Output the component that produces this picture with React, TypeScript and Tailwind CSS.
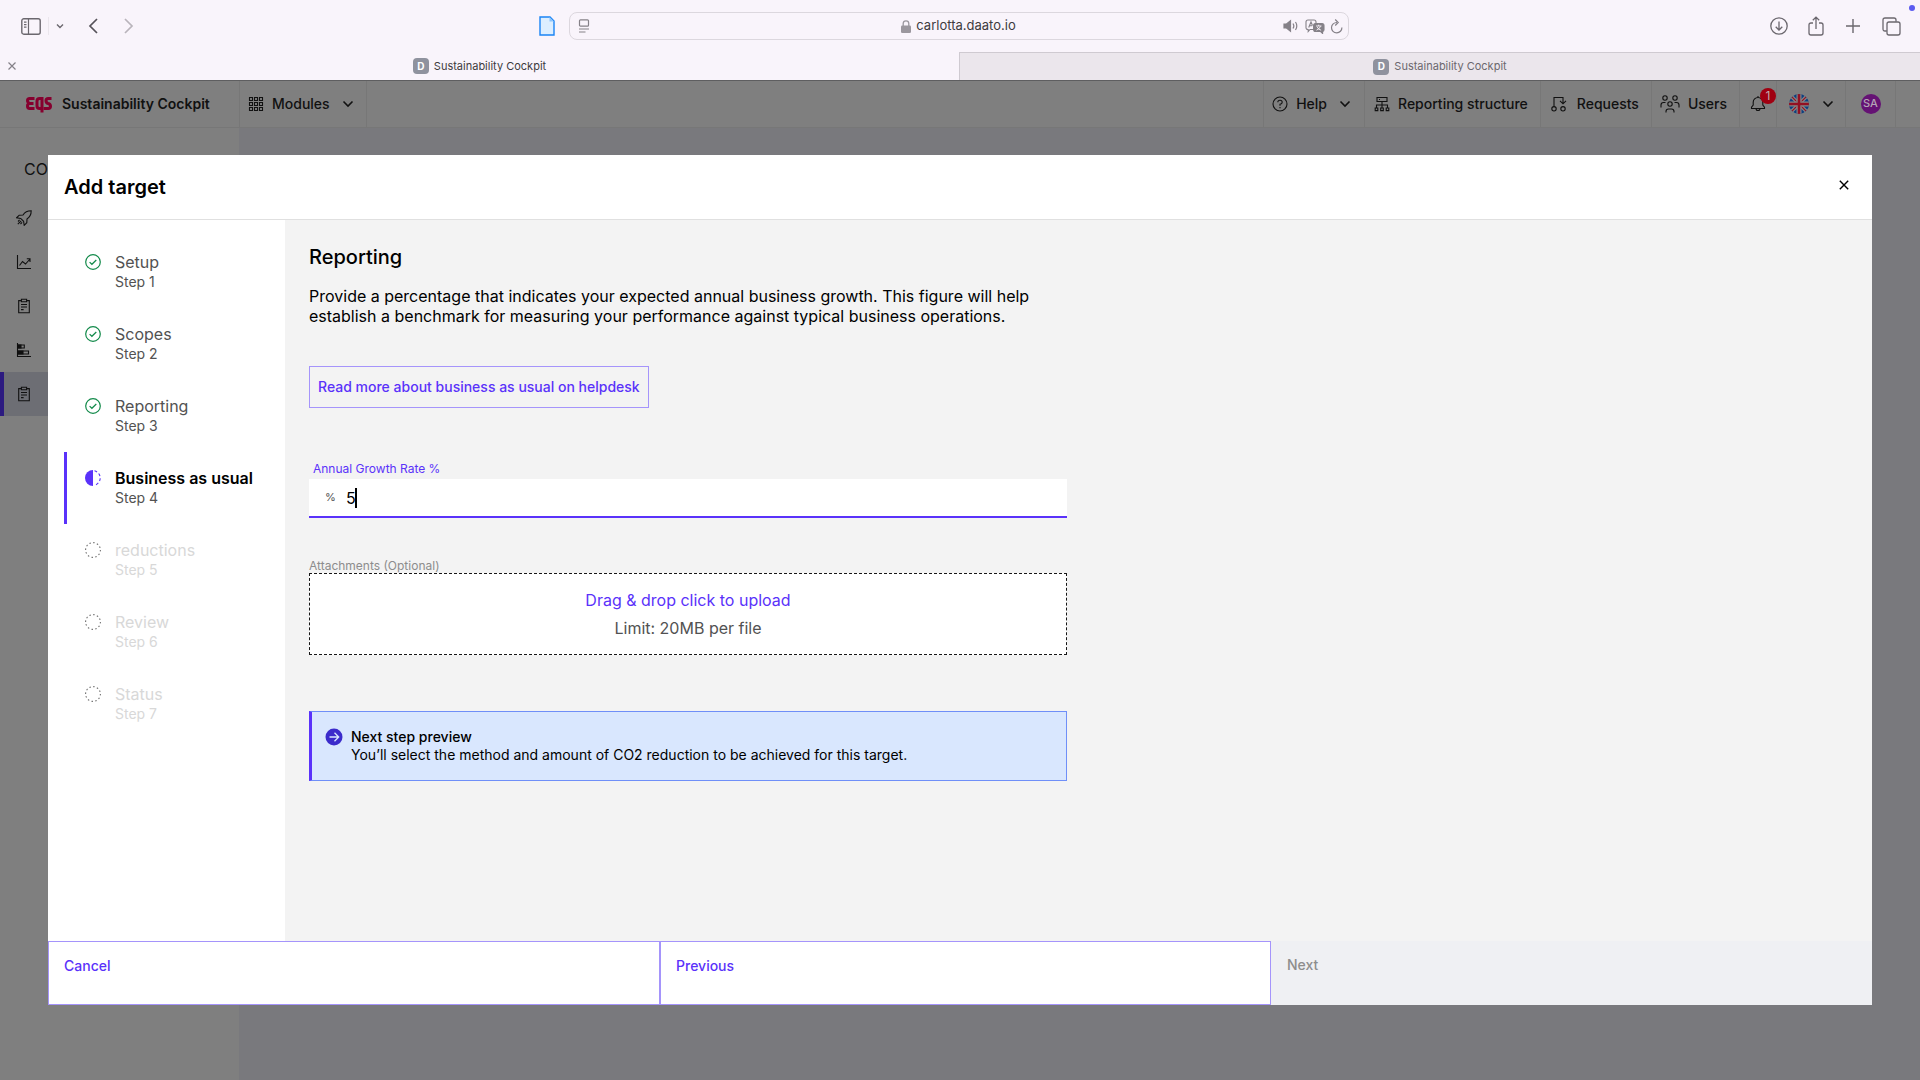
import { useState, type FC, type ReactNode } from "react";

const DashedRing: FC = () => (
  <svg viewBox="0 0 16 16" className="size-4" fill="none" aria-hidden="true">
    <circle cx="8" cy="8" r="7.4" stroke="#6f6f6f" strokeWidth="1.1" strokeDasharray="1.5 2.37" />
  </svg>
);

const HalfRing: FC = () => (
  <svg viewBox="0 0 16 16" className="size-4" fill="none" aria-hidden="true">
    <path d="M9.500 .8A7.400 7.400 0 0 1 9.500 15.200" stroke="#5a32fa" strokeWidth="1.100" strokeDasharray="2.800 2.200" />
    <path d="M8 0a8 8 0 0 0 0 16z" fill="#5a32fa" />
  </svg>
);

const CheckRing: FC = () => (
  <svg viewBox="0 0 16 16" className="size-4" fill="none" stroke="#128a4a" strokeWidth="1.2" aria-hidden="true">
    <circle cx="8" cy="8" r="7.3" />
    <path d="M4.6 8.1l2.3 2.2 4.400-4.300" />
  </svg>
);

const Chevron: FC = () => (
  <svg viewBox="0 0 12 12" className="size-3" fill="none" stroke="currentColor" strokeWidth="1.6" aria-hidden="true">
    <path d="M1.5 3.5L6 8l4.5-4.5" />
  </svg>
);

const Icon: FC<{ children: ReactNode }> = ({ children }) => (
  <svg
    viewBox="0 0 16 16"
    className="size-4 shrink-0"
    fill="none"
    stroke="currentColor"
    strokeWidth="1.1"
    aria-hidden="true"
  >
    {children}
  </svg>
);

const EqsLogo: FC = () => (
  <svg
    viewBox="0 0 27 18"
    className="h-[18px] w-[27px] shrink-0"
    fill="none"
    stroke="#86002f"
    strokeWidth="3"
    role="img"
    aria-label="EQS"
  >
    <path d="M9.500 3.500H4.700Q2.500 3.500 2.500 5.500T4.700 8.500H8.500M4.700 8.500Q2.500 8.500 2.500 11T4.700 13.500H9.500" />
    <path d="M17 17.500V3.500h-2.300q-2.700 0-2.700 2.500v5q0 2.500 2.700 2.500H17" />
    <path d="M26.500 3.500h-3.200q-2.300 0-2.300 2.200t2.200 2.800q2.300.5 2.300 2.700t-2.300 2.300h-4.700" />
  </svg>
);

const UkFlag: FC = () => (
  <svg viewBox="0 0 20 20" className="size-5 shrink-0" role="img" aria-label="English">
    <clipPath id="flag">
      <circle cx="10" cy="10" r="10" />
    </clipPath>
    <g clipPath="url(#flag)">
      <path fill="#0c3f80" d="M0 0h20v20H0z" />
      <path d="M0 0l20 20M20 0L0 20" stroke="#858585" strokeWidth="3.6" />
      <path d="M0 0l20 20M20 0L0 20" stroke="#930f22" strokeWidth="1.2" />
      <path d="M10 0v20M0 10h20" stroke="#858585" strokeWidth="5" />
      <path d="M10 0v20M0 10h20" stroke="#930f22" strokeWidth="2.6" />
    </g>
  </svg>
);

const clipboard = (
  <Icon>
    <path d="M5 2.6H2.7v12.2h10.6V2.6H11" />
    <path d="M5.4 1.2h5.2v2.6H5.4zM5 6.5h6M5 9h6M5 11.6h2.6" />
  </Icon>
);

const sideItems = [
  {
    label: "Get started",
    icon: (
      <Icon>
        <path d="M15.2.8C11 .8 8.6 2.4 7 5L3.2 5.2.6 7.8l4.1.6 2.9 2.9.6 4 2.6-2.6L11 9c2.6-1.6 4.2-4 4.2-8.2zM5.2 10.800l-3.400 3.400M3.600 9.900l-1.600 1.600M6.100 12.400l-1.600 1.600" />
      </Icon>
    ),
  },
  {
    label: "Trends",
    icon: (
      <Icon>
        <path d="M1.5 1v13.5H15M3.5 11.5l3-4 3 2.5 4.5-5M10.8 4.700H14v3.200" />
      </Icon>
    ),
  },
  { label: "Reports", icon: clipboard },
  {
    label: "Comparison",
    icon: (
      <Icon>
        <path d="M1.5 1v13.5H15M1.5 3h6.800v3H1.500M1.500 9h11v3h-11" />
        <path d="M2 3h3v3H2zM2 9h5v3H2z" fill="currentColor" />
      </Icon>
    ),
  },
  { label: "Targets", icon: clipboard, active: true },
];

type StepState = "done" | "current" | "todo";

const steps: { name: string; state: StepState }[] = [
  { name: "Setup", state: "done" },
  { name: "Scopes", state: "done" },
  { name: "Reporting", state: "done" },
  { name: "Business as usual", state: "current" },
  { name: "reductions", state: "todo" },
  { name: "Review", state: "todo" },
  { name: "Status", state: "todo" },
];

const stepIcon: Record<StepState, ReactNode> = {
  done: <CheckRing />,
  current: <HalfRing />,
  todo: <DashedRing />,
};

const titleColor: Record<StepState, string> = {
  done: "text-[#525252]",
  current: "text-black font-semibold",
  todo: "text-[#d8d8d8]",
};

const TabLabel: FC<{ dim?: boolean }> = ({ dim }) => (
  <span className={`flex items-center gap-[5px] text-[11px] ${dim ? "text-[#6c686e]" : "text-[#3e3b40]"}`}>
    <span className="flex size-4 items-center justify-center rounded bg-[#8f929e] text-[10px] font-bold text-white">
      D
    </span>
    Sustainability Cockpit
  </span>
);

const BrowserChrome: FC = () => (
  <div className="bg-[#f9f4fb] text-[#6b676e]">
    <div className="relative grid h-[52px] grid-cols-[1fr_842px_1fr] items-center">
      <div className="flex items-center pl-[21px]">
        <button aria-label="Show sidebar">
          <svg
            viewBox="0 0 20 17"
            className="h-[17px] w-5"
            fill="none"
            stroke="currentColor"
            strokeWidth="1.4"
            aria-hidden="true"
          >
            <rect x=".8" y=".8" width="18.4" height="15.4" rx="2" />
            <path d="M7.5 1v15M3 4.2h2.500M3 6.700h2.500M3 9.200h2.500" strokeWidth="1.2" />
          </svg>
        </button>
        <span className="ml-[7px] mr-[7px] h-[18px] w-px bg-[#ebe6ed]" />
        <button aria-label="Tab groups" className="mr-6">
          <svg viewBox="0 0 8 8" className="size-2" fill="none" stroke="currentColor" strokeWidth="1.4" aria-hidden="true">
            <path d="M1 2.5l3 3 3-3" />
          </svg>
        </button>
        <button aria-label="Back" className="mr-[26px]">
          <svg viewBox="0 0 10 16" className="h-4 w-[10px]" fill="none" stroke="#565259" strokeWidth="1.7" aria-hidden="true">
            <path d="M9 1L2 8l7 7" />
          </svg>
        </button>
        <button aria-label="Forward">
          <svg viewBox="0 0 10 16" className="h-4 w-[10px]" fill="none" stroke="#b9b4bb" strokeWidth="1.7" aria-hidden="true">
            <path d="M1 1l7 7-7 7" />
          </svg>
        </button>
      </div>

      <div className="flex items-center gap-[14px] pr-8">
        <svg viewBox="0 0 16 20" className="h-5 w-4 shrink-0" aria-hidden="true">
          <path d="M1 1h10l4 4v14H1z" fill="#dceeff" stroke="#1a84f5" strokeWidth="1.4" />
          <path d="M10.5 1v4.500H15z" fill="#8cc4fb" />
        </svg>
        <div className="flex h-7 flex-1 items-center rounded-lg border border-[#dcd7de] pl-2 pr-[5px]">
          <svg viewBox="0 0 12 14" className="h-[14px] w-3" fill="none" stroke="#858188" strokeWidth="1.2" aria-hidden="true">
            <rect x="1.5" y=".8" width="9" height="6.4" rx="1" />
            <path d="M1 10h10M1 13h6.500" />
          </svg>
          <div className="flex flex-1 items-center justify-center gap-[5px] pl-11 text-[13px] text-[#3e3b40]">
            <svg viewBox="0 0 10 13" className="h-[13px] w-[10px]" aria-hidden="true">
              <rect y="5.5" width="10" height="7.500" rx="1.3" fill="#9b979e" />
              <path d="M2.2 6V3.600a2.800 2.800 0 0 1 5.600 0V6" fill="none" stroke="#9b979e" strokeWidth="1.3" />
            </svg>
            carlotta.daato.io
          </div>
          <div className="flex items-center gap-[5px]">
            <svg viewBox="0 0 17 14" className="h-[14px] w-[17px]" fill="none" stroke="#858188" strokeWidth="1.2" aria-hidden="true">
              <path d="M1 5h2.500L7.500 1.800v10.400L3.500 9H1z" fill="#858188" />
              <path d="M10 4.500q1.700 2.500 0 5M12.500 3q2.600 4 0 8" />
            </svg>
            <svg viewBox="0 0 20 15" className="h-[15px] w-5" fill="none" stroke="#858188" strokeWidth="1.1" aria-hidden="true">
              <path d="M9 10.500H5L3.200 12.500v-2Q1 10.500 1 8.500V3q0-2 2-2h6q2 0 2 2v1M3.700 8.500L6 3l1.500 3.500M4.500 6.700h2.700" />
              <path
                d="M10.500 4.500h6.500q2 0 2 2v4.200q0 1.600-1.400 1.800V14.500l-2-2h-5q-2 0-2-2V6.500q0-2 1.900-2z"
                fill="#858188"
              />
              <path
                d="M11 7h5.500M13.700 5.700V7M11.500 11.200q3.200-1.200 4-4M12.200 8q1.200 2.600 3.900 3.200"
                stroke="#f9f4fb"
                strokeWidth=".9"
              />
            </svg>
            <button aria-label="Reload">
              <svg viewBox="0 0 13 15" className="h-[15px] w-[13px]" fill="none" stroke="#858188" strokeWidth="1.2" aria-hidden="true">
                <path d="M7 3.500A5.200 5.200 0 1 0 11.900 8.500M5.200.5L8.200 3.500 5.200 6.500" />
              </svg>
            </button>
          </div>
        </div>
      </div>

      <div className="flex items-center justify-end gap-5 pr-[19px]">
        <button aria-label="Downloads">
          <svg viewBox="0 0 18 18" className="size-[18px]" fill="none" stroke="currentColor" strokeWidth="1.3" aria-hidden="true">
            <circle cx="9" cy="9" r="8.2" />
            <path d="M9 4.500v8.500M5.700 9.800L9 13l3.300-3.200" />
          </svg>
        </button>
        <button aria-label="Share">
          <svg viewBox="0 0 16 20" className="h-5 w-4" fill="none" stroke="currentColor" strokeWidth="1.3" aria-hidden="true">
            <path d="M5 7H3Q1 7 1 9v8q0 2 2 2h10q2 0 2-2V9q0-2-2-2h-2M8 13V1.200M4.800 4.300L8 1.100l3.200 3.200" />
          </svg>
        </button>
        <button aria-label="New tab" className="mx-[2px]">
          <svg viewBox="0 0 14 14" className="size-[14px]" fill="none" stroke="currentColor" strokeWidth="1.4" aria-hidden="true">
            <path d="M7 0v14M0 7h14" />
          </svg>
        </button>
        <button aria-label="Tab overview">
          <svg viewBox="0 0 19 19" className="size-[19px]" fill="none" stroke="currentColor" strokeWidth="1.3" aria-hidden="true">
            <rect x="5" y="5" width="13" height="13" rx="2" />
            <path d="M4.800 14H3q-2 0-2-2V3q0-2 2-2h9q2 0 2 2v1.800" />
          </svg>
        </button>
      </div>
      <span className="absolute right-[5px] top-[5px] size-[6px] rounded-full bg-[#5b5bf0]" />
    </div>

    <div className="grid h-7 grid-cols-[959fr_961fr]">
      <div className="flex items-center">
        <button aria-label="Close tab" className="pl-2">
          <svg viewBox="0 0 8 8" className="size-2" stroke="#858188" strokeWidth="1.2" aria-hidden="true">
            <path d="M.5.5l7 7M7.500.5l-7 7" />
          </svg>
        </button>
        <div className="flex flex-1 justify-center pr-4">
          <TabLabel />
        </div>
      </div>
      <div className="flex items-center justify-center border-l border-t border-[#cfcad1] bg-[#ebe6ec]">
        <TabLabel dim />
      </div>
    </div>
  </div>
);

const navItem = "flex items-center border-r border-[#777777] text-sm font-medium";

const AppHeader: FC = () => (
  <header className="flex h-12 border-b border-t border-b-[#777777] border-t-[#5e5e60] bg-[#7f7f7f] text-[#111111]">
    <div className={`${navItem} w-60 shrink-0 gap-[10px] pl-[25px] font-semibold`}>
      <EqsLogo />
      Sustainability Cockpit
    </div>
    <button className={`${navItem} gap-2 pl-2 pr-3`}>
      <Icon>
        <path d="M1.5 1.5h3v3h-3zM6.5 1.5h3v3h-3zM11.5 1.5h3v3h-3zM1.5 6.5h3v3h-3zM6.5 6.5h3v3h-3zM11.5 6.5h3v3h-3zM1.5 11.5h3v3h-3zM6.5 11.5h3v3h-3zM11.5 11.5h3v3h-3z" />
      </Icon>
      Modules
      <span className="ml-1">
        <Chevron />
      </span>
    </button>
    <div className="ml-auto flex border-l border-[#777777] pr-6">
      <button className={`${navItem} gap-2 pl-2 pr-[13px]`}>
        <Icon>
          <circle cx="8" cy="8" r="7" />
          <path d="M5.800 6.200Q5.800 4.200 8 4.200t2.200 2Q10.200 8 8 8.200V9.800M8 11v1.300" />
        </Icon>
        Help
        <span className="ml-1">
          <Chevron />
        </span>
      </button>
      <button className={`${navItem} gap-2 pl-[9px] pr-3`}>
        <Icon>
          <path d="M3 1.500h10v4H3zM8 5.500V9M2.500 12V9h11v3M8 9v3M1.200 12h2.600v2.600H1.200zM6.700 12h2.600v2.600H6.700zM12.200 12h2.600v2.600h-2.600zM5 3.500h1" />
        </Icon>
        Reporting structure
      </button>
      <button className={`${navItem} gap-[10px] pl-[10px] pr-3`}>
        <Icon>
          <path d="M3 10.500V1.500h9V7.500M9 4.800L12 7.800l3-3" />
          <circle cx="3" cy="12.800" r="2.200" />
          <circle cx="12" cy="12.800" r="2.200" />
        </Icon>
        Requests
      </button>
      <button className={`${navItem} gap-2 pl-2 pr-3`}>
        <svg
          viewBox="0 0 20 18"
          className="h-[18px] w-5 shrink-0"
          fill="none"
          stroke="currentColor"
          strokeWidth="1.1"
          aria-hidden="true"
        >
          <circle cx="5" cy="3" r="2.200" />
          <circle cx="15" cy="3" r="2.200" />
          <circle cx="10" cy="9" r="2.200" />
          <path d="M1 12.500V10q0-2.500 2.500-2.500h2M19 12.500V10q0-2.500-2.500-2.500h-2M6 17.500v-1q0-2.500 2.500-2.500h3q2.500 0 2.500 2.500v1" />
        </svg>
        Users
      </button>
      <button aria-label="Notifications, 1 new" className={`${navItem} relative w-[37px] pl-[10px]`}>
        <Icon>
          <path d="M1.500 12.500h13v-1.300L12.800 9V6.300a4.800 4.800 0 0 0-9.600 0V9l-1.700 2.200zM6 12.500a2 2 0 0 0 4 0M8 1.500V0" />
        </Icon>
        <span className="absolute left-5 top-[7px] flex size-4 items-center justify-center rounded-full bg-[#a00011] text-xs font-normal text-[#bfabad]">
          1
        </span>
      </button>
      <button className={`${navItem} w-[69px] gap-[13px] pl-3`}>
        <UkFlag />
        <Chevron />
      </button>
      <button aria-label="Account" className={`${navItem} w-[50px] justify-center`}>
        <span className="flex size-5 items-center justify-center rounded-full bg-[#651274] text-[11px] font-medium text-[#b3a4b5]">
          SA
        </span>
      </button>
    </div>
  </header>
);

const StepList: FC = () => (
  <ol className="w-[237px] shrink-0 bg-white pl-4 pt-4">
    {steps.map((step, i) => (
      <li
        key={step.name}
        aria-current={step.state === "current" ? "step" : undefined}
        className={`flex h-[72px] gap-[14px] border-l-[3px] pl-[18px] pt-4 ${
          step.state === "current" ? "border-[#5a32fa]" : "border-transparent"
        }`}
      >
        <span className="pt-[2px]">{stepIcon[step.state]}</span>
        <div>
          <p className={`text-base leading-5 ${titleColor[step.state]}`}>{step.name}</p>
          <p className={`text-sm leading-5 ${step.state === "todo" ? "text-[#d8d8d8]" : "text-[#525252]"}`}>
            Step {i + 1}
          </p>
        </div>
      </li>
    ))}
  </ol>
);

const TargetForm: FC = () => {
  const [rate, setRate] = useState("5");

  return (
    <section className="flex-1 bg-[#f3f3f3] px-6 pt-6 text-black">
      <div className="w-[758px] max-w-full">
        <h2 className="text-xl font-medium leading-[26px]">Reporting</h2>
        <p className="mt-4 text-base leading-5">
          Provide a percentage that indicates your expected annual business growth. This figure will help establish a
          benchmark for measuring your performance against typical business operations.
        </p>
        <a
          href="#helpdesk"
          className="mt-10 inline-flex h-[42px] items-center border border-[#a594fb] px-2 text-sm font-medium text-[#5a32fa]"
        >
          Read more about business as usual on helpdesk
        </a>

        <label htmlFor="rate" className="mt-[53px] block pl-1 text-xs leading-4 text-[#5a32fa]">
          Annual Growth Rate %
        </label>
        <div className="mt-[2px] flex h-[39px] items-center border-b-2 border-[#5a32fa] bg-white pl-4">
          <span className="w-[21px] text-[11px] text-[#525252]">%</span>
          <div className="relative flex flex-1 items-center">
            <input
              id="rate"
              inputMode="decimal"
              value={rate}
              onChange={(e) => setRate(e.target.value)}
              className="w-full bg-transparent text-base caret-transparent outline-none"
            />
            <span className="pointer-events-none absolute left-[9px] h-5 w-[2px] bg-black" />
          </div>
        </div>

        <label htmlFor="files" className="mt-[41px] block text-xs leading-[14px] text-[#8d8d8d]">
          Attachments (Optional)
        </label>
        <label
          htmlFor="files"
          className="flex h-[82px] cursor-pointer flex-col items-center justify-center gap-2 border border-dashed border-[#161616] bg-white text-base leading-5 text-[#525252]"
        >
          <span className="text-[#5a32fa]">Drag &amp; drop click to upload</span>
          <span>Limit: 20MB per file</span>
        </label>
        <input id="files" type="file" className="sr-only" />

        <div className="mt-14 flex h-[70px] gap-2 border border-l-[3px] border-[#6f8ff8] border-l-[#5a32fa] bg-[#d9e7fe] pl-[13px] pt-4 text-sm leading-[18px]">
          <svg viewBox="0 0 18 18" className="size-[18px] shrink-0" aria-hidden="true">
            <circle cx="9" cy="9" r="8.500" fill="#3b2bcb" />
            <path d="M4.500 9h9M9.500 4.800L13.700 9l-4.200 4.200" fill="none" stroke="#d9e7fe" strokeWidth="1.3" />
          </svg>
          <div>
            <p className="font-medium">Next step preview</p>
            <p>You’ll select the method and amount of CO2 reduction to be achieved for this target.</p>
          </div>
        </div>
      </div>
    </section>
  );
};

const outlineButton = "flex items-start border border-[#a594fb] bg-white px-[15px] pt-[14px] text-[#5a32fa]";

const TargetDialog: FC = () => (
  <div
    role="dialog"
    aria-labelledby="dialog-title"
    className="absolute inset-x-12 bottom-[75px] top-[75px] flex flex-col bg-white"
  >
    <div className="flex h-[65px] items-start justify-between border-b border-[#e0e0e0] pl-4 pr-[15px] pt-[17px]">
      <h1 id="dialog-title" className="text-xl font-semibold leading-[30px] text-black">
        Add target
      </h1>
      <button aria-label="Close" className="p-2 text-black">
        <svg viewBox="0 0 10 10" className="size-[10px]" stroke="currentColor" strokeWidth="1.4" aria-hidden="true">
          <path d="M.8.8l8.400 8.400M9.200.8L.8 9.200" />
        </svg>
      </button>
    </div>
    <div className="flex flex-1">
      <StepList />
      <TargetForm />
    </div>
    <div className="grid h-16 grid-cols-[612fr_611fr_601fr] text-sm font-medium leading-5">
      <button className={outlineButton}>Cancel</button>
      <button className={outlineButton}>Previous</button>
      <button disabled className="flex items-start bg-[#eff0f3] px-4 pt-[14px] text-[#8d8d8d]">
        Next
      </button>
    </div>
  </div>
);

export default function App() {
  return (
    <div className="flex min-h-screen flex-col font-['Inter',sans-serif]">
      <BrowserChrome />
      <div className="relative flex flex-1 flex-col">
        <AppHeader />
        <div className="flex flex-1">
          <nav aria-label="Cockpit" className="w-[239px] shrink-0 bg-[#7f7f7f] pt-[27px] text-[#111111]">
            <p className="mb-[13px] px-6 text-base leading-7">COCKPIT</p>
            {sideItems.map((item) => (
              <a
                key={item.label}
                href="#cockpit"
                aria-label={item.label}
                className={`flex h-11 items-center border-l-4 pl-3 ${
                  item.active ? "border-[#2c1a80] bg-[#6d6e74]" : "border-transparent"
                }`}
              >
                {item.icon}
              </a>
            ))}
          </nav>
          <main className="flex-1 bg-[#79797d]" />
        </div>
        <TargetDialog />
      </div>
    </div>
  );
}
